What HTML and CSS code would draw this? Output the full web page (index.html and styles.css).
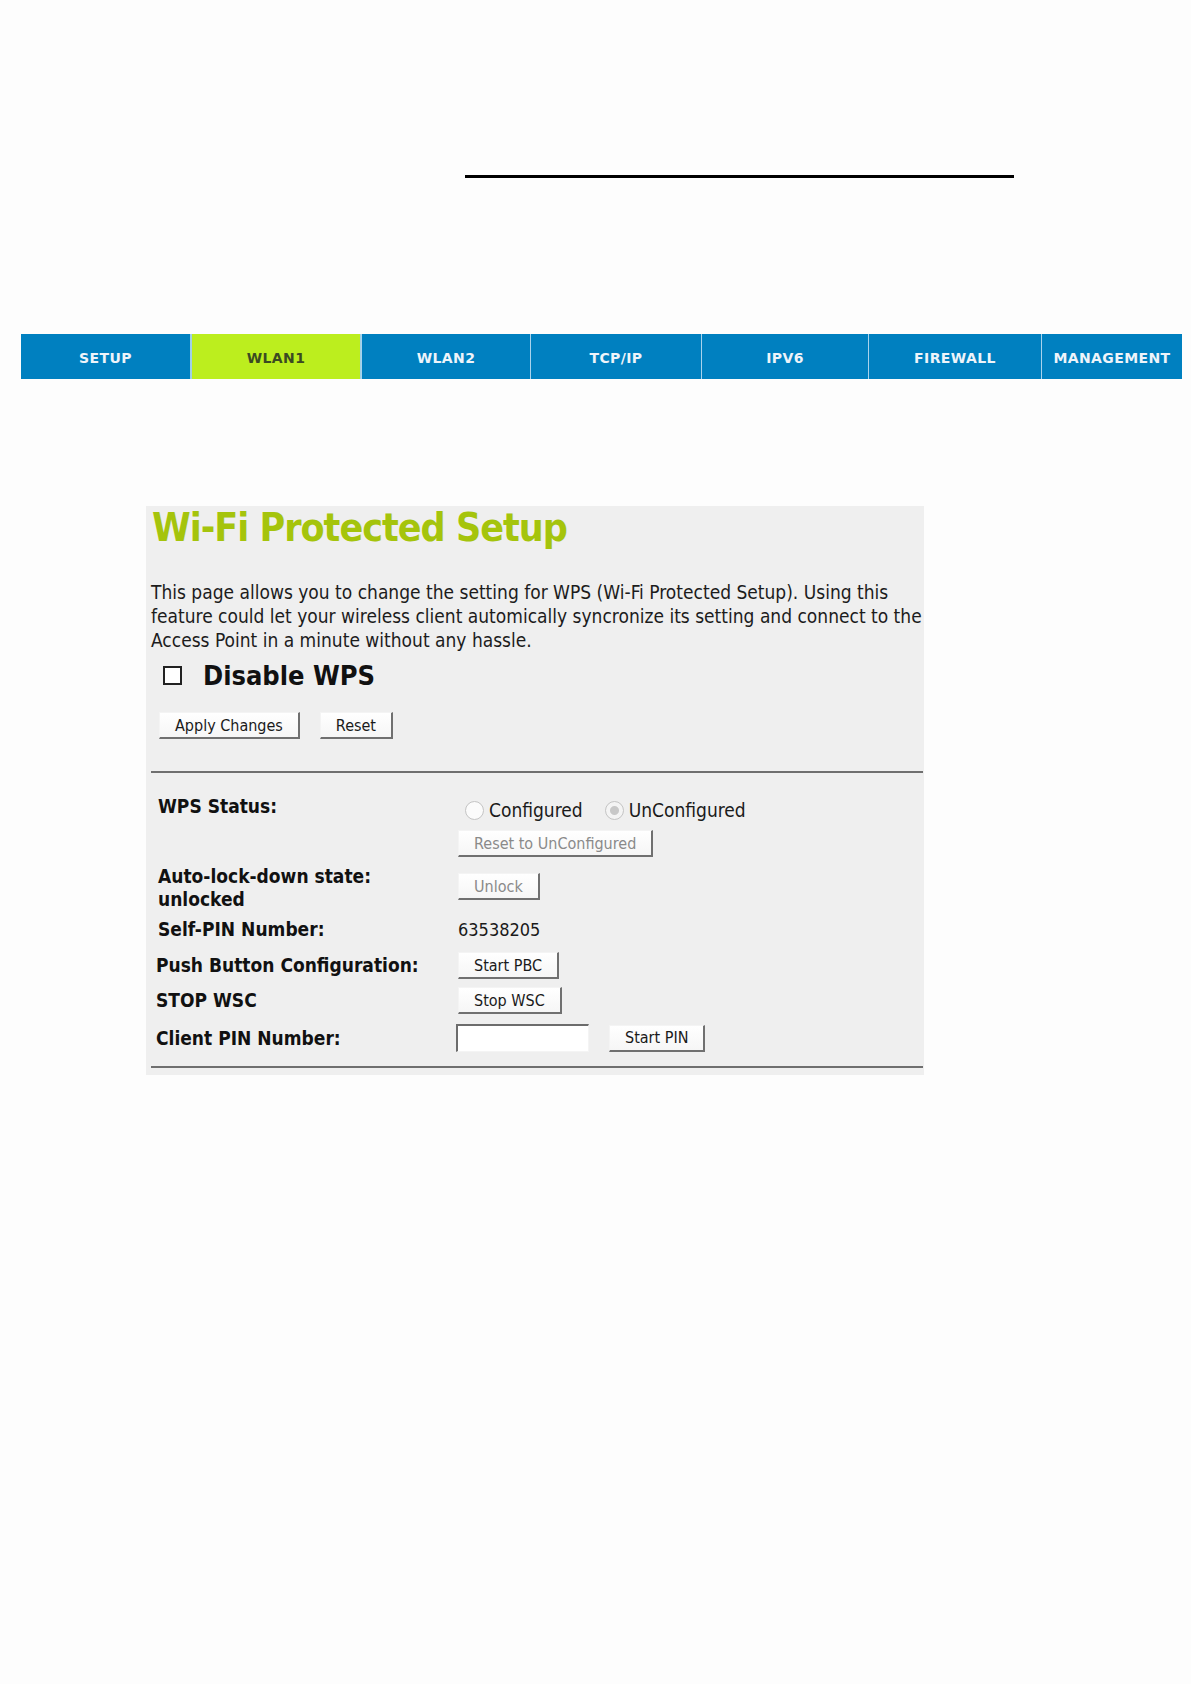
FILE: index.html
```html
<!DOCTYPE html>
<html lang="en">
<head>
    <meta charset="UTF-8">
    <meta name="viewport" content="width=device-width, initial-scale=1.0">
    <title>Wi-Fi Protected Setup</title>
    <link rel="stylesheet" href="styles.css">
</head>
<body>
    <div class="top-rule"></div>

    <nav class="tabs">
        <a class="tab" style="width: 169px">SETUP</a>
        <a class="tab active" style="width: 171px">WLAN1</a>
        <a class="tab" style="width: 169px">WLAN2</a>
        <a class="tab" style="width: 171px">TCP/IP</a>
        <a class="tab" style="width: 167px">IPV6</a>
        <a class="tab" style="width: 173px">FIREWALL</a>
        <a class="tab last">MANAGEMENT</a>
    </nav>

    <main class="panel">
        <h1>Wi-Fi Protected Setup</h1>
        <p class="intro">This page allows you to change the setting for WPS (Wi-Fi Protected Setup). Using this feature could let your wireless client automically syncronize its setting and connect to the Access Point in a minute without any hassle.</p>

        <form id="wps-form">
            <label class="disable">
                <input type="checkbox" class="check" name="disableWps">
                <span>Disable WPS</span>
            </label>

            <div class="actions">
                <button type="submit" class="btn">Apply Changes</button>
                <button type="reset" class="btn">Reset</button>
            </div>

            <div class="divider"></div>

            <div class="rows">
                <div class="row row-status">
                    <div class="label">WPS Status:</div>
                    <div class="value">
                        <div class="radios">
                            <label><input type="radio" class="radio" name="status" disabled><span>Configured</span></label>
                            <label><input type="radio" class="radio" name="status" checked disabled><span>UnConfigured</span></label>
                        </div>
                        <button type="button" class="btn" disabled>Reset to UnConfigured</button>
                    </div>
                </div>

                <div class="row row-lock">
                    <div class="label">Auto-lock-down state:<br>unlocked</div>
                    <div class="value">
                        <button type="button" class="btn" disabled>Unlock</button>
                    </div>
                </div>

                <div class="row row-pin">
                    <div class="label">Self-PIN Number:</div>
                    <div class="value">63538205</div>
                </div>

                <div class="row row-btn">
                    <div class="label">Push Button Configuration:</div>
                    <div class="value">
                        <button type="button" class="btn">Start PBC</button>
                    </div>
                </div>

                <div class="row row-btn">
                    <div class="label">STOP WSC</div>
                    <div class="value">
                        <button type="button" class="btn">Stop WSC</button>
                    </div>
                </div>

                <div class="row row-client">
                    <div class="label">Client PIN Number:</div>
                    <div class="value">
                        <input type="text" class="pin-input" name="clientPin">
                        <button type="button" class="btn">Start PIN</button>
                    </div>
                </div>
            </div>

            <div class="divider bottom"></div>
        </form>
    </main>
</body>
</html>
```

FILE: styles.css
```css
body {
    margin: 0;
    padding: 0;
    background-color: #fdfdfd;
    font-family: "DejaVu Sans Condensed", "DejaVu Sans", sans-serif;
    color: #1a1a1a;
}
.top-rule {
    margin: 175px 0 0 465px;
    width: 549px;
    height: 3px;
    background: #000;
}
.tabs {
    display: flex;
    margin: 156px 0 0 21px;
    width: 1161px;
    height: 45px;
    background: #0080c0;
}
.tab {
    display: flex;
    align-items: center;
    justify-content: center;
    box-sizing: border-box;
    padding-top: 3px;
    border-left: 1px solid #a9d3ec;
    font-family: "DejaVu Sans", sans-serif;
    font-weight: bold;
    font-size: 14px;
    letter-spacing: 0.4px;
    color: #eef4fa;
}
.tab:first-child {
    border-left: none;
}
.tab.active {
    background: #bcee1e;
    color: #3b4a22;
    border-left: 2px solid #9fd0e6;
    border-right: 1px solid #9fd0e6;
}
.tab.last {
    flex: 1;
}
.panel {
    margin: 127px 0 0 146px;
    width: 778px;
    height: 569px;
    box-sizing: border-box;
    padding: 0 1px 0 5px;
    background: #efefef;
}
h1 {
    margin: 0;
    padding-left: 1px;
    font-size: 39px;
    line-height: 44px;
    letter-spacing: -1px;
    font-weight: bold;
    color: #a5c40c;
}
.intro {
    margin: 30px 0 0;
    font-size: 19px;
    line-height: 24px;
    color: #1c1c1c;
}
.disable {
    display: flex;
    align-items: center;
    margin-top: 7px;
    padding-left: 12px;
    height: 32px;
    font-size: 27px;
    font-weight: bold;
    color: #111;
}
.check {
    appearance: none;
    margin: 0 21px 0 0;
    width: 19px;
    height: 19px;
    border: 2px solid #222;
    background: #fff;
}
.actions {
    display: flex;
    gap: 20px;
    margin-top: 21px;
    padding-left: 8px;
}
.btn {
    height: 27px;
    padding: 0 15px;
    font-family: "DejaVu Sans Condensed", "DejaVu Sans", sans-serif;
    font-size: 16px;
    color: #1a1a1a;
    background: linear-gradient(#ffffff, #f6f6f6);
    border-style: solid;
    border-width: 1px 2px 2px 1px;
    border-color: #f4f4f4 #707070 #707070 #f4f4f4;
    border-radius: 0;
}
.btn:disabled {
    color: #8a8a8a;
}
.divider {
    margin-top: 32px;
    height: 2px;
    background: #6f6f6f;
}
.rows {
    padding: 22px 0 0 7px;
}
.row {
    display: flex;
}
.label {
    width: 300px;
    flex: none;
    font-size: 19px;
    line-height: 23px;
    font-weight: bold;
    color: #111;
}
.value {
    font-size: 18px;
    line-height: 23px;
}
.row-status {
    height: 70px;
}
.radios {
    display: flex;
    gap: 22px;
    margin-left: 7px;
    height: 30px;
    font-size: 19px;
}
.radios label {
    display: flex;
    align-items: center;
    gap: 5px;
    color: #1a1a1a;
}
.radio {
    appearance: none;
    margin: 0;
    width: 19px;
    height: 19px;
    border-radius: 50%;
    border: 1px solid #c4c4c4;
    background: #fbfbfb;
}
.radio:checked {
    background: radial-gradient(circle, #c8c8c8 0 4px, #f4f4f4 5px);
}
.row-status .btn {
    margin-top: 5px;
}
.row-lock {
    height: 46px;
}
.row-lock .btn {
    margin-top: 8px;
}
.row-pin {
    height: 37px;
    align-items: center;
}
.row-btn {
    height: 35px;
    align-items: center;
}
.row-btn .label {
    margin-left: -2px;
    width: 302px;
}
.row-client {
    height: 40px;
    align-items: center;
}
.row-client .label {
    margin-left: -2px;
    width: 302px;
}
.row-client .value {
    display: flex;
    align-items: center;
    gap: 20px;
}
.pin-input {
    box-sizing: border-box;
    margin-left: -2px;
    width: 133px;
    height: 28px;
    background: #fff;
    border-style: solid;
    border-width: 2px 1px 1px 2px;
    border-color: #6c6c6c #f4f4f4 #f4f4f4 #6c6c6c;
}
.divider.bottom {
    margin-top: 8px;
}
```
